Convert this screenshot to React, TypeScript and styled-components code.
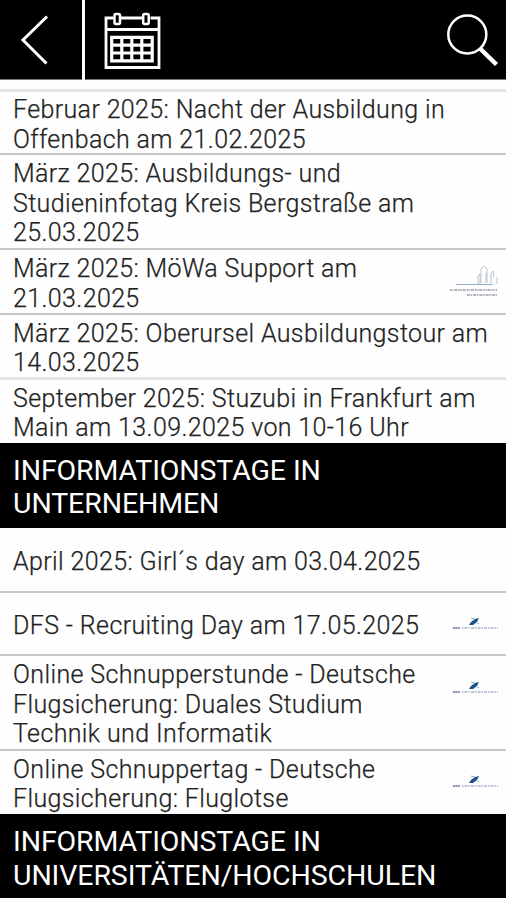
import React from "react";
import styled, { createGlobalStyle } from "styled-components";

const GlobalStyle = createGlobalStyle`
  * { box-sizing: border-box; }
  html, body { margin: 0; padding: 0; background: #fff; }
  body { font-family: Roboto, sans-serif; overflow: hidden; }
`;

const Screen = styled.main`
  display: flex;
  flex-direction: column;
  width: 506px;
  height: 900px;
  overflow: hidden;
  background: #fefefe;
`;

const Toolbar = styled.header`
  display: flex;
  flex: none;
  height: 80px;
  background: #000;
  border-bottom: 1px solid #777;
`;

const ToolButton = styled.button<{ $width: number }>`
  width: ${(p) => p.$width}px;
  height: 79px;
  padding: 0;
  border: 0;
  background: none;
  svg { display: block; }
`;

const Divider = styled.div`
  width: 3px;
  height: 80px;
  background: #fff;
`;

const Spacer = styled.div`
  flex: 1;
`;

const ListTop = styled.div`
  flex: none;
  height: 12px;
  border-bottom: 3px solid #e5e5e5;
`;

const Row = styled.div<{ $height: number; $soft?: boolean; $last?: boolean }>`
  display: flex;
  flex: none;
  align-items: center;
  justify-content: space-between;
  height: ${(p) => p.$height}px;
  padding: 0 6px ${(p) => (p.$last ? 1 : 0)}px 13px;
  border-bottom: ${(p) => (p.$last ? "0" : p.$soft ? "3px solid #e5e5e5" : "2px solid #c8c8c8")};
`;

const RowText = styled.div`
  padding-top: 4px;
  color: #222;
  font-size: 25px;
  font-weight: 300;
  line-height: 29.4px;
  letter-spacing: 0.37px;
  -webkit-text-stroke: 0.25px #222;
`;

const LogoSlot = styled.div<{ $top?: boolean }>`
  display: flex;
  align-self: ${(p) => (p.$top ? "flex-start" : "center")};
  padding-top: ${(p) => (p.$top ? 23 : 0)}px;
`;

const Line = styled.span`
  display: block;
  white-space: nowrap;
`;

const Section = styled.h2<{ $height: number; $shift: number }>`
  display: flex;
  flex: none;
  flex-direction: column;
  justify-content: center;
  height: ${(p) => p.$height}px;
  margin: 0;
  padding: ${(p) => p.$shift}px 13px 0;
  background: #000;
  color: #fff;
  font-size: 28.5px;
  font-weight: 400;
  line-height: 33.4px;
  letter-spacing: -0.1px;
`;

const BackIcon = () => (
  <svg width="82" height="79" viewBox="0 0 82 79" fill="none" stroke="#fff" strokeWidth="3">
    <path d="M47 16.5 23 40l23.500 23.500" />
  </svg>
);

const CalendarIcon = () => (
  <svg width="90" height="79" viewBox="85 0 90 79" fill="none" stroke="#fff">
    <path strokeWidth="2.800" d="M113.500 18H106v49.500h53V18h-8.500M121 18h21M106 29.500h53" />
    <rect x="114.500" y="14" width="5.500" height="10" rx="1.500" strokeWidth="2.500" />
    <rect x="143.200" y="14" width="5.500" height="10" rx="1.500" strokeWidth="2.500" />
    <path strokeWidth="3.200" d="M111.700 37.300h40.500v23.500h-40.500zM111.500 45.200h41M111.500 53h41M121.800 37.300v23.500M131.800 37.300v23.500M141.800 37.300v23.500" />
  </svg>
);

const SearchIcon = () => (
  <svg width="66" height="79" viewBox="440 0 66 79" fill="none" stroke="#fff">
    <circle cx="467.300" cy="34.500" r="19" strokeWidth="2.500" />
    <path d="m480 48.500 16.500 16" strokeWidth="4.500" />
  </svg>
);

const SkylineLogo = () => (
  <svg width="52" height="36" viewBox="0 0 52 36" fill="none">
    <path d="M30 20v-8l2-2v10M33 19V5l3-3 3 3v14M38 19V9M43 19v-9l2-3 1 6M49 20v-7" stroke="#a9b7c3" strokeWidth=".8" />
    <path d="M8 20.500h37" stroke="#8fb0cd" strokeWidth="1.200" />
    <path d="M2 26h47" stroke="#8d949d" strokeWidth="2" strokeDasharray="2 .7 1 .6 3 1" opacity=".7" />
    <path d="M19 31h30" stroke="#777e88" strokeWidth="1.600" strokeDasharray="3 .7 1.500 1" opacity=".75" />
  </svg>
);

const FlightLogo = () => (
  <svg width="48" height="18" viewBox="0 0 48 18">
    <path d="m17 10 2-3 4-3 4-1-2 4-4 3z" fill="#214f82" />
    <path d="m19 3 4 1M25 8l2 1" stroke="#79afc8" strokeWidth="1" />
    <path d="M1 13h7" stroke="#8494b4" strokeWidth="2" strokeDasharray="2 .4" />
    <path d="M10 13h36" stroke="#a6b4c8" strokeWidth="1.600" strokeDasharray="1.500 1 3 1" />
  </svg>
);

type Entry = {
  lines: string[];
  height: number;
  soft?: boolean;
  last?: boolean;
  logo?: "skyline" | "flight";
};

const fairs: Entry[] = [
  { lines: ["Februar 2025: Nacht der Ausbildung in", "Offenbach am 21.02.2025"], height: 63 },
  { lines: ["März 2025: Ausbildungs- und", "Studieninfotag Kreis Bergstraße am", "25.03.2025"], height: 95 },
  { lines: ["März 2025: MöWa Support am", "21.03.2025"], height: 65, logo: "skyline" },
  { lines: ["März 2025: Oberursel Ausbildungstour am", "14.03.2025"], height: 65, soft: true },
  { lines: ["September 2025: Stuzubi in Frankfurt am", "Main am 13.09.2025 von 10-16 Uhr"], height: 63, last: true },
];

const companies: Entry[] = [
  { lines: ["April 2025: Girl´s day am 03.04.2025"], height: 65 },
  { lines: ["DFS - Recruiting Day am 17.05.2025"], height: 63, logo: "flight" },
  { lines: ["Online Schnupperstunde - Deutsche", "Flugsicherung: Duales Studium", "Technik und Informatik"], height: 95, logo: "flight" },
  { lines: ["Online Schnuppertag - Deutsche", "Flugsicherung: Fluglotse"], height: 63, last: true, logo: "flight" },
];

const Entries = ({ items }: { items: Entry[] }) => (
  <>
    {items.map((e) => (
      <Row key={e.lines[0]} $height={e.height} $soft={e.soft} $last={e.last}>
        <RowText>
          {e.lines.map((text) => (
            <Line key={text}>{text}</Line>
          ))}
        </RowText>
        {e.logo && (
          <LogoSlot $top={e.lines.length > 2}>
            {e.logo === "skyline" ? <SkylineLogo /> : <FlightLogo />}
          </LogoSlot>
        )}
      </Row>
    ))}
  </>
);

export default function App() {
  return (
    <Screen>
      <GlobalStyle />
      <Toolbar>
        <ToolButton $width={82} aria-label="Zurück"><BackIcon /></ToolButton>
        <Divider />
        <ToolButton $width={90} aria-label="Kalender"><CalendarIcon /></ToolButton>
        <Spacer />
        <ToolButton $width={66} aria-label="Suche"><SearchIcon /></ToolButton>
      </Toolbar>
      <ListTop />
      <Entries items={fairs} />
      <Section $height={85} $shift={3.5}>
        <Line>INFORMATIONSTAGE IN</Line>
        <Line>UNTERNEHMEN</Line>
      </Section>
      <Entries items={companies} />
      <Section $height={84} $shift={5}>
        <Line>INFORMATIONSTAGE IN</Line>
        <Line>UNIVERSITÄTEN/HOCHSCHULEN</Line>
      </Section>
    </Screen>
  );
}
